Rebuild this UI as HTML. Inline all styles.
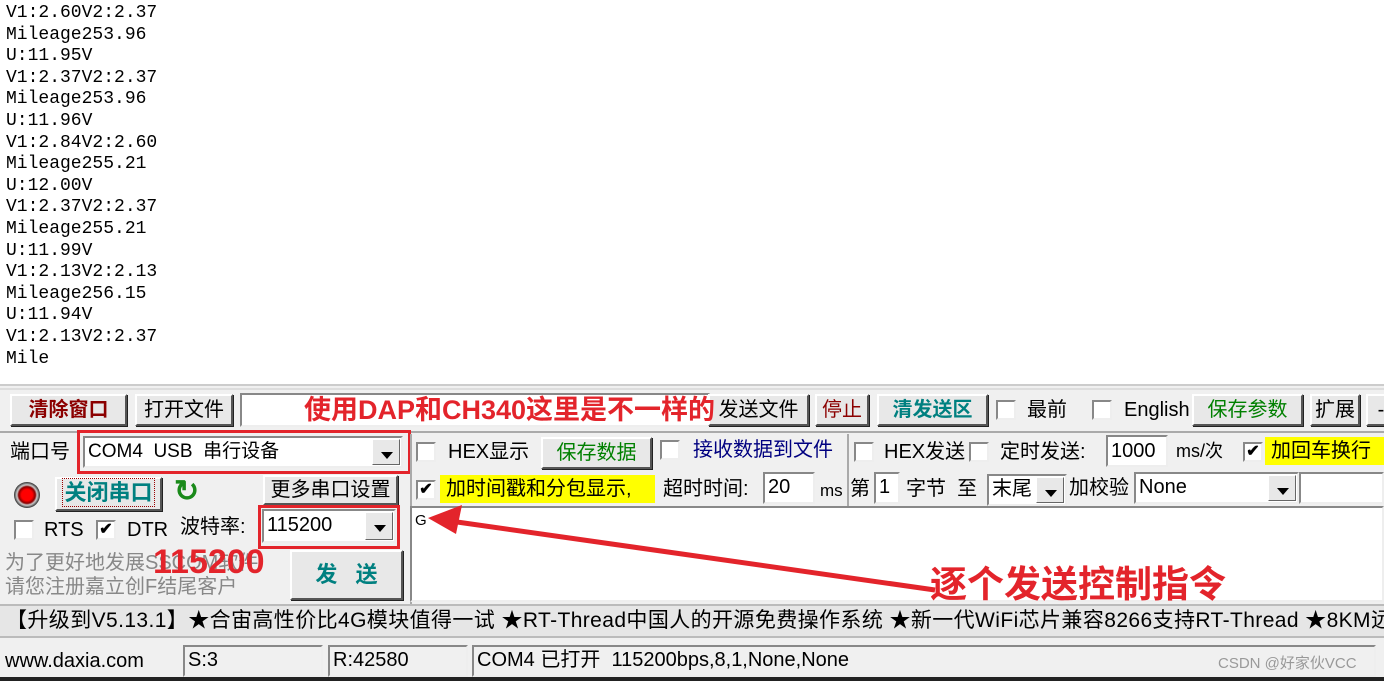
<!DOCTYPE html>
<html><head><meta charset="utf-8"><style>
*{margin:0;padding:0;box-sizing:border-box}
body{width:1384px;height:681px;overflow:hidden;background:#fff;position:relative;font-family:"Liberation Sans","Noto Sans CJK SC",sans-serif;font-size:20px;line-height:24px;color:#000}
.a{position:absolute;white-space:nowrap}
#log{position:absolute;left:6px;top:3px;font-family:"Liberation Mono","Noto Sans CJK SC",monospace;font-size:18px;line-height:21.6px;color:#000}
.btn{position:absolute;background:#e8e8e8;border:2px solid;border-color:#fff #555 #555 #fff;box-shadow:1px 1px 0 #222;text-align:center;white-space:nowrap;line-height:28px}
.in{position:absolute;background:#fff;border:2px solid;border-color:#888 #eee #eee #888;white-space:nowrap;padding-left:3px}
.cb{position:absolute;width:20px;height:20px;background:#fff;border:2px solid;border-color:#888 #eee #eee #888;font-size:16px;line-height:16px;text-align:center;font-weight:bold}
.dd{position:absolute;right:1px;top:1px;bottom:1px;width:28px;background:#e8e8e8;border:1px solid;border-color:#fff #666 #666 #fff}
.dd:after{content:"";position:absolute;left:8px;top:12px;border:6px solid transparent;border-top:7px solid #000}
.red{position:absolute;border:3px solid #e3242b}
</style></head><body>
<div id="log">V1:2.60V2:2.37<br>Mileage253.96<br>U:11.95V<br>V1:2.37V2:2.37<br>Mileage253.96<br>U:11.96V<br>V1:2.84V2:2.60<br>Mileage255.21<br>U:12.00V<br>V1:2.37V2:2.37<br>Mileage255.21<br>U:11.99V<br>V1:2.13V2:2.13<br>Mileage256.15<br>U:11.94V<br>V1:2.13V2:2.37<br>Mile</div>

<div class="a" style="left:0;top:384px;width:1384px;height:297px;background:#f0f0f0;border-top:2px solid #ccc"></div>
<div class="a" style="left:0;top:388px;width:1384px;height:2px;background:#ddd"></div>

<!-- row1 -->
<div class="btn" style="left:10px;top:394px;width:117px;height:32px;color:#8b0000;font-weight:bold">清除窗口</div>
<div class="btn" style="left:135px;top:394px;width:98px;height:32px">打开文件</div>
<div class="in" style="left:240px;top:393px;width:470px;height:34px"></div>
<div class="btn" style="left:708px;top:394px;width:101px;height:32px">发送文件</div>
<div class="a" style="left:304px;top:394px;color:#e3242b;font-weight:bold;font-size:27px;line-height:32px">使用DAP和CH340这里是不一样的</div>
<div class="btn" style="left:815px;top:394px;width:54px;height:32px;color:#8b0000">停止</div>
<div class="btn" style="left:877px;top:394px;width:111px;height:32px;color:#008080;font-weight:bold">清发送区</div>
<div class="cb" style="left:996px;top:400px"></div><div class="a" style="left:1027px;top:398px">最前</div>
<div class="cb" style="left:1092px;top:400px"></div><div class="a" style="left:1124px;top:398px">English</div>
<div class="btn" style="left:1192px;top:394px;width:111px;height:32px;color:#008000">保存参数</div>
<div class="btn" style="left:1310px;top:394px;width:50px;height:32px">扩展</div>
<div class="btn" style="left:1366px;top:394px;width:30px;height:32px">-</div>
<div class="a" style="left:0;top:431px;width:1384px;height:2px;background:#aaa"></div>

<!-- row2 -->
<div class="a" style="left:10px;top:440px">端口号</div>
<div class="in" style="left:83px;top:436px;width:320px;height:32px;font-size:19px;line-height:27px">COM4&nbsp; USB&nbsp; 串行设备<div class="dd"></div></div>
<div class="red" style="left:77px;top:430px;width:334px;height:44px"></div>
<div class="a" style="left:410px;top:434px;width:2px;height:170px;background:#aaa"></div>
<div class="cb" style="left:416px;top:442px"></div><div class="a" style="left:448px;top:440px">HEX显示</div>
<div class="btn" style="left:541px;top:437px;width:111px;height:32px;color:#008000">保存数据</div>
<div class="cb" style="left:660px;top:440px"></div><div class="a" style="left:693px;top:438px;color:#000080">接收数据到文件</div>
<div class="a" style="left:847px;top:434px;width:2px;height:72px;background:#aaa"></div>
<div class="cb" style="left:854px;top:442px"></div><div class="a" style="left:884px;top:440px">HEX发送</div>
<div class="cb" style="left:969px;top:442px"></div><div class="a" style="left:1000px;top:440px">定时发送:</div>
<div class="in" style="left:1106px;top:435px;width:62px;height:32px;line-height:28px">1000</div>
<div class="a" style="left:1176px;top:439px;font-size:18px">ms/次</div>
<div class="cb" style="left:1243px;top:442px">✔</div>
<div class="a" style="left:1265px;top:437px;width:119px;height:28px;background:#ff0;padding-left:6px;line-height:28px">加回车换行</div>

<!-- row3 -->
<div class="a" style="left:14px;top:482px;width:26px;height:26px;border-radius:50%;background:radial-gradient(#f00 30%,#800 45%,#ccc 55%,#333 70%,#ddd 80%)"></div>
<div class="btn" style="left:55px;top:477px;width:107px;height:34px;color:#008080;font-weight:bold;font-size:22px"><span style="outline:1px dotted #900;outline-offset:1px">关闭串口</span></div>
<div class="a" style="left:174px;top:476px;font-size:30px;line-height:32px;color:#1a8a1a;font-weight:bold">↻</div>
<div class="btn" style="left:263px;top:475px;width:135px;height:30px;line-height:26px">更多串口设置</div>
<div class="cb" style="left:416px;top:480px">✔</div>
<div class="a" style="left:440px;top:475px;width:215px;height:28px;background:#ff0;padding-left:6px;line-height:28px">加时间戳和分包显示,</div>
<div class="a" style="left:663px;top:477px">超时时间:</div>
<div class="in" style="left:763px;top:472px;width:52px;height:32px;line-height:27px">20</div>
<div class="a" style="left:820px;top:479px;font-size:17px">ms</div>
<div class="a" style="left:850px;top:477px">第</div>
<div class="in" style="left:874px;top:472px;width:26px;height:32px;line-height:27px">1</div>
<div class="a" style="left:906px;top:477px">字节&nbsp; 至</div>
<div class="in" style="left:987px;top:474px;width:80px;height:32px;line-height:27px">末尾<div class="dd"></div></div>
<div class="a" style="left:1069px;top:476px">加校验</div>
<div class="in" style="left:1134px;top:472px;width:165px;height:32px;line-height:27px">None<div class="dd"></div></div>
<div class="in" style="left:1299px;top:472px;width:85px;height:32px"></div>

<!-- row4 -->
<div class="cb" style="left:14px;top:520px"></div><div class="a" style="left:44px;top:518px">RTS</div>
<div class="cb" style="left:96px;top:520px">✔</div><div class="a" style="left:127px;top:518px">DTR</div>
<div class="a" style="left:180px;top:515px">波特率:</div>
<div class="in" style="left:262px;top:509px;width:134px;height:34px;line-height:29px">115200<div class="dd"></div></div>
<div class="red" style="left:258px;top:505px;width:142px;height:44px"></div>
<div class="in" style="left:410px;top:506px;width:974px;height:96px;font-size:15px;line-height:26px">G</div>

<!-- row5 -->
<div class="a" style="left:5px;top:551px;color:#888;font-size:20px;line-height:24px">为了更好地发展SSCOM软件<br>请您注册嘉立创F结尾客户</div>
<div class="a" style="left:153px;top:542px;color:#e3242b;font-weight:bold;font-size:34px;line-height:40px">115200</div>
<div class="btn" style="left:290px;top:550px;width:113px;height:50px;line-height:46px;color:#008080;font-weight:bold;font-size:22px">发 &nbsp; 送</div>

<!-- arrow -->
<svg class="a" style="left:0;top:0" width="1384" height="681">
<line x1="935" y1="590" x2="450" y2="521" stroke="#e3242b" stroke-width="5"/>
<polygon points="428,518 462,505 456,534" fill="#e3242b"/>
</svg>
<div class="a" style="left:930px;top:563px;color:#e3242b;font-weight:bold;font-size:37px;line-height:44px">逐个发送控制指令</div>

<!-- ticker -->
<div class="a" style="left:0;top:604px;width:1384px;height:34px;background:#e6e6e6;border-top:2px solid #bbb;border-bottom:2px solid #bbb;font-size:21px;line-height:30px;padding-left:6px;overflow:hidden;letter-spacing:0.4px">【升级到V5.13.1】★合宙高性价比4G模块值得一试 ★RT-Thread中国人的开源免费操作系统 ★新一代WiFi芯片兼容8266支持RT-Thread ★8KM远</div>

<!-- status -->
<div class="a" style="left:0;top:640px;width:1384px;height:38px;background:#f0f0f0"></div>
<div class="a" style="left:5px;top:649px;height:28px;font-size:20px">www.daxia.com</div>
<div class="in" style="left:183px;top:645px;width:140px;height:32px;background:#f0f0f0;font-size:20px;line-height:27px">S:3</div>
<div class="in" style="left:328px;top:645px;width:140px;height:32px;background:#f0f0f0;font-size:20px;line-height:27px">R:42580</div>
<div class="in" style="left:472px;top:645px;width:904px;height:32px;background:#f0f0f0;font-size:20px;line-height:27px">COM4 已打开&nbsp; 115200bps,8,1,None,None</div>
<div class="a" style="left:1218px;top:652px;color:#999;font-size:15px">CSDN @好家伙VCC</div>
<div class="a" style="left:0;top:677px;width:1384px;height:4px;background:#222"></div>
</body></html>
